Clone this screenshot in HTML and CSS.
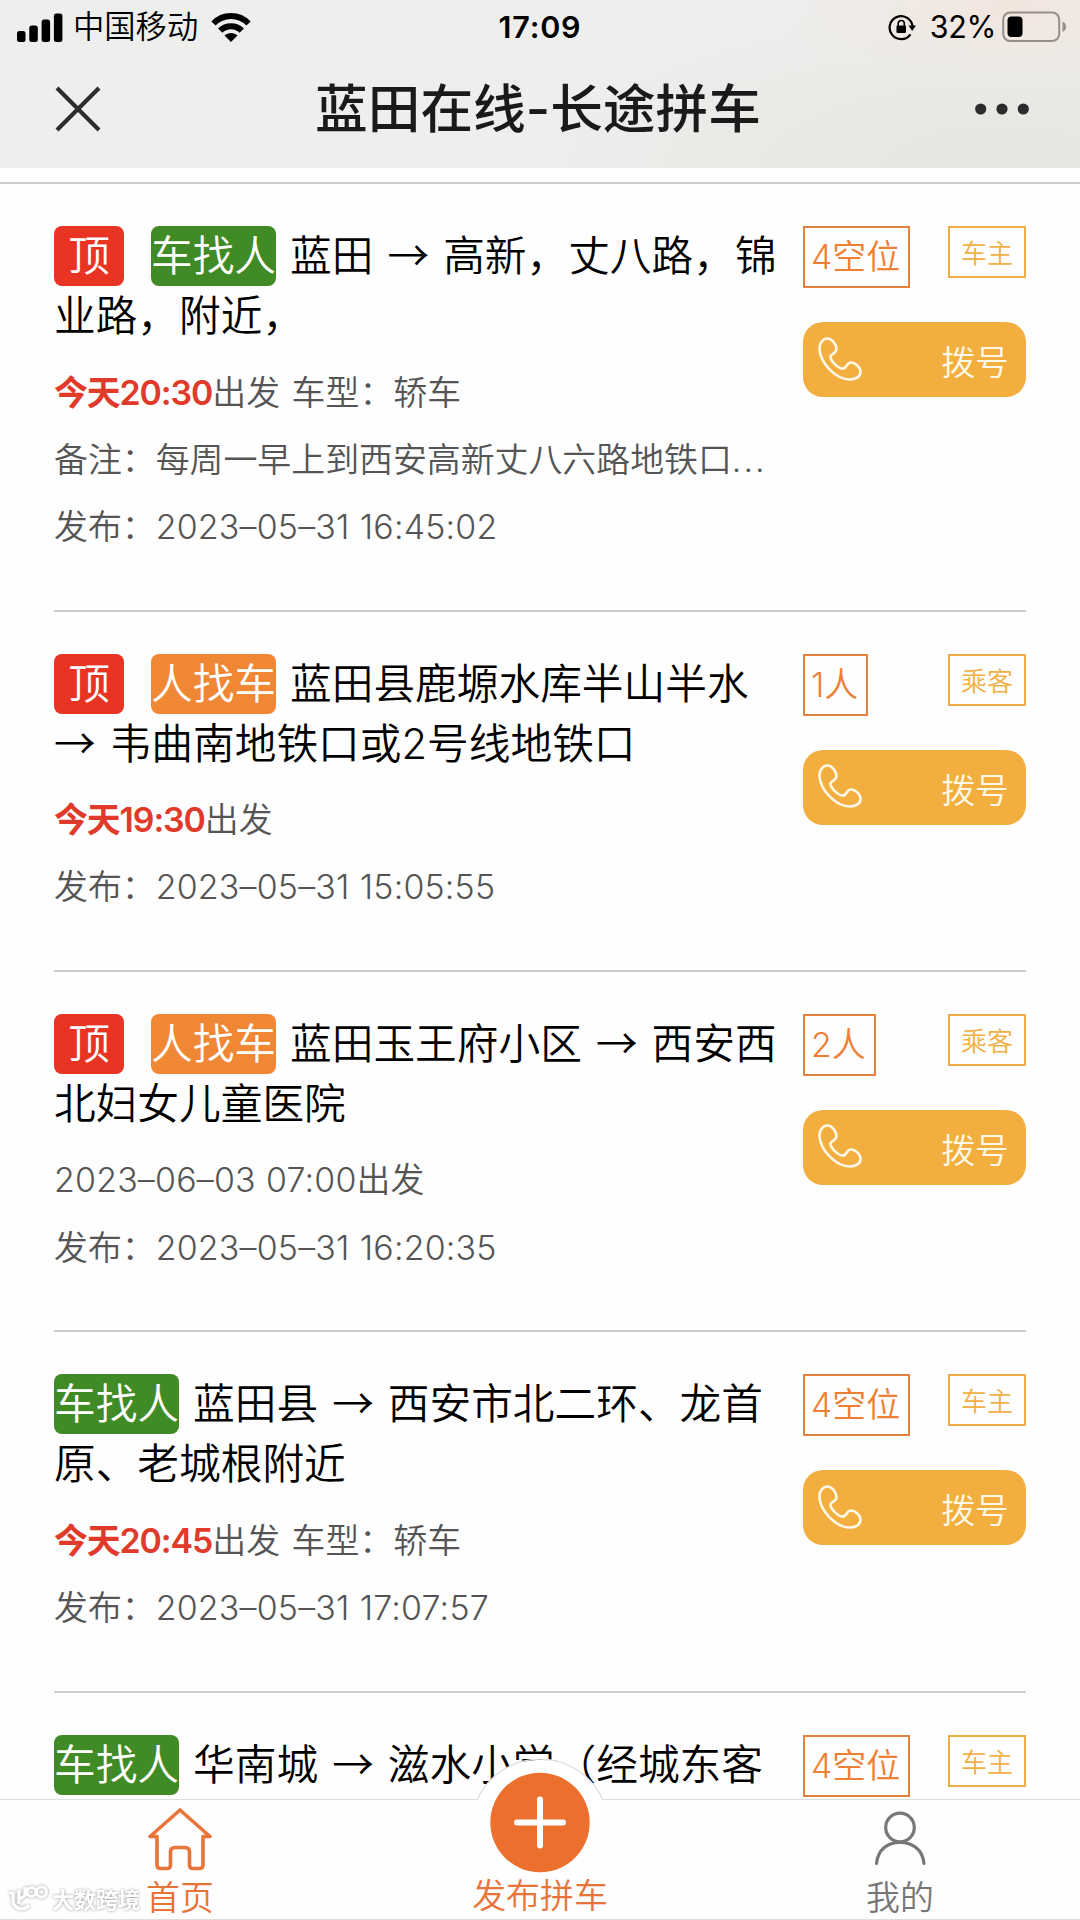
FILE: index.html
```html
<!DOCTYPE html>
<html lang="zh-CN">
<head>
    <meta charset="UTF-8">
    <meta name="viewport" content="width=device-width, initial-scale=1.0">
    <title>蓝田在线-长途拼车</title>
    <link rel="stylesheet" href="styles.css">
</head>
<body>
    <svg class="sprite" width="0" height="0">
        <symbol id="phone" viewBox="0 0 44 44">
            <path d="M9.500 1.500C5 1.500 1.500 6 1.500 11C1.500 26 18 42.500 32 42.500C38 42.500 42.500 39.500 42.500 35C42.500 30 37 25.500 33 25.500C28 25.500 29.500 31.500 24.500 31.500C20 31.500 12.500 24 12.500 19.500C12.500 16.500 18.500 17 18.500 12C18.500 7.500 14 1.500 9.500 1.500Z" fill="none" stroke="#fff8e6" stroke-width="2.6"/>
        </symbol>
    </svg>

    <header class="header">
        <div class="status-bar">
            <div class="status-left">
                <svg class="signal" width="46" height="29" viewBox="0 0 46 29">
                    <rect x="0" y="18" width="8.500" height="11" rx="2.500"/>
                    <rect x="12.300" y="12.500" width="8.500" height="16.500" rx="2.500"/>
                    <rect x="24.600" y="6.500" width="8.500" height="22.500" rx="2.500"/>
                    <rect x="36.900" y="0.500" width="8.500" height="28.500" rx="2.500"/>
                </svg>
                <span class="carrier">中国移动</span>
                <svg class="wifi" width="40" height="30" viewBox="0 0 40 30">
                    <g fill="none" stroke="#000" stroke-width="6">
                        <path d="M2.500 11.500C12 1.500 28 1.500 37.500 11.500"/>
                        <path d="M9.200 18.700C15 12.700 25 12.700 30.800 18.700"/>
                    </g>
                    <path d="M13.500 23.500C17 20 23 20 26.500 23.500L20 30Z"/>
                </svg>
            </div>
            <div class="clock">17:09</div>
            <div class="status-right">
                <svg class="lock" width="28" height="28" viewBox="0 0 28 28">
                    <path d="M22.500 21.300A11.500 11.500 0 1 1 24.500 13" fill="none" stroke="#000" stroke-width="2.2"/>
                    <path d="M20.500 12.500H28L24.200 18Z"/>
                    <rect x="8.500" y="12.500" width="9.500" height="7.500" rx="1"/>
                    <path d="M10.200 13V10.500A3 3 0 0 1 16.300 10.500V13" fill="none" stroke="#000" stroke-width="1.6"/>
                </svg>
                <span class="percent">32%</span>
                <svg class="battery" width="65" height="32" viewBox="0 0 65 32">
                    <rect x="1.200" y="1.500" width="56" height="28.500" rx="7" fill="none" stroke="#948d89" stroke-width="2"/>
                    <rect x="5.500" y="5.500" width="15" height="20.500" rx="4"/>
                    <path d="M60.500 10.500Q64 12 64 15.700T60.500 21Z" fill="#948d89"/>
                </svg>
            </div>
        </div>
        <div class="nav-bar">
            <svg class="close" width="46" height="46" viewBox="0 0 46 46">
                <path d="M2 2L44 44M44 2L2 44" stroke="#2c2c2c" stroke-width="4.200"/>
            </svg>
            <h1>蓝田在线-长途拼车</h1>
            <svg class="more" width="54" height="12" viewBox="0 0 54 12">
                <circle cx="5.700" cy="6" r="5.600"/>
                <circle cx="27" cy="6" r="5.600"/>
                <circle cx="48.300" cy="6" r="5.600"/>
            </svg>
        </div>
    </header>

    <main class="list">
        <article class="item">
            <div class="info">
                <h2><span class="tag top">顶</span><span class="tag car">车找人</span>蓝田<i>→</i>高新，丈八路，锦<br>业路，附近，</h2>
                <p><b>今天20:30</b>出发 车型：轿车</p>
                <p>备注：每周一早上到西安高新丈八六路地铁口<span class="dots">...</span></p>
                <p>发布：<span class="date">2023–05–31 16:45:02</span></p>
            </div>
            <div class="side">
                <div class="labels"><span class="seats">4空位</span><span class="role">车主</span></div>
                <button class="call"><svg width="44" height="44"><use href="#phone"/></svg>拨号</button>
            </div>
        </article>

        <article class="item">
            <div class="info">
                <h2><span class="tag top">顶</span><span class="tag people">人找车</span>蓝田县鹿塬水库半山半水<br><i class="first">→</i>韦曲南地铁口或2号线地铁口</h2>
                <p><b>今天19:30</b>出发</p>
                <p>发布：<span class="date">2023–05–31 15:05:55</span></p>
            </div>
            <div class="side">
                <div class="labels"><span class="seats">1人</span><span class="role">乘客</span></div>
                <button class="call"><svg width="44" height="44"><use href="#phone"/></svg>拨号</button>
            </div>
        </article>

        <article class="item">
            <div class="info">
                <h2><span class="tag top">顶</span><span class="tag people">人找车</span>蓝田玉王府小区<i>→</i>西安西<br>北妇女儿童医院</h2>
                <p><span class="date">2023–06–03 07:00</span>出发</p>
                <p>发布：<span class="date">2023–05–31 16:20:35</span></p>
            </div>
            <div class="side">
                <div class="labels"><span class="seats">2人</span><span class="role">乘客</span></div>
                <button class="call"><svg width="44" height="44"><use href="#phone"/></svg>拨号</button>
            </div>
        </article>

        <article class="item">
            <div class="info">
                <h2><span class="tag car">车找人</span>蓝田县<i>→</i>西安市北二环、龙首<br>原、老城根附近</h2>
                <p><b>今天20:45</b>出发 车型：轿车</p>
                <p>发布：<span class="date">2023–05–31 17:07:57</span></p>
            </div>
            <div class="side">
                <div class="labels"><span class="seats">4空位</span><span class="role">车主</span></div>
                <button class="call"><svg width="44" height="44"><use href="#phone"/></svg>拨号</button>
            </div>
        </article>

        <article class="item">
            <div class="info">
                <h2><span class="tag car">车找人</span>华南城<i>→</i>滋水小学（经城东客</h2>
            </div>
            <div class="side">
                <div class="labels"><span class="seats">4空位</span><span class="role">车主</span></div>
            </div>
        </article>
    </main>

    <nav class="tabbar">
        <a class="tab active">
            <svg width="66" height="66" viewBox="0 0 66 66">
                <path d="M33 3L3 29.500H10V58Q10 61.500 13.500 61.500H20Q23.500 61.500 23.500 58V45Q23.500 40.500 28 40.500H38Q42.500 40.500 42.500 45V58Q42.500 61.500 46 61.500H52.500Q56 61.500 56 58V29.500H63Z" fill="none" stroke="#e8743a" stroke-width="3.600" stroke-linejoin="round"/>
            </svg>
            <span>首页</span>
        </a>
        <a class="tab publish">
            <svg width="130" height="114" viewBox="0 0 130 114">
                <path d="M2 41.500A69 69 0 0 1 128 41.500V60H2Z" fill="#fff"/>
                <path d="M2 41A69 69 0 0 1 128 41" fill="none" stroke="#dedede" stroke-width="1.300"/>
                <circle cx="65" cy="63.500" r="49.700" fill="#eb702d"/>
                <path d="M42 63.500H88M65 40.500V86.500" stroke="#fff" stroke-width="6" stroke-linecap="round"/>
            </svg>
            <span>发布拼车</span>
        </a>
        <a class="tab">
            <svg width="66" height="66" viewBox="0 0 66 66">
                <g fill="none" stroke="#777" stroke-width="3.200" stroke-linecap="round">
                    <circle cx="33" cy="20.500" r="14.300"/>
                    <path d="M9.500 56.500C11 42 21 35.500 33 35.500S55.500 42 57 56.500"/>
                </g>
            </svg>
            <span>我的</span>
        </a>
        <div class="watermark">
            <svg width="42" height="30" viewBox="0 0 42 30">
                <g fill="none" stroke="#fff" stroke-width="3.200">
                    <path d="M1 8H5V17A9 9 0 0 0 21 20M11 5V19M19 9L12 14M17 2V11"/>
                    <circle cx="23.500" cy="7" r="4.500"/>
                    <circle cx="33.500" cy="7" r="5"/>
                </g>
            </svg>
            <span>大数跨境</span>
        </div>
    </nav>
</body>
</html>
```
FILE: styles.css
```css
* {
    box-sizing: border-box;
}

body {
    margin: 0;
    width: 1080px;
    height: 1920px;
    overflow: hidden;
    position: relative;
    background: #fefefe;
    font-family: Inter, "Noto Sans CJK SC", sans-serif;
    font-weight: 350;
}

h1, h2, p {
    margin: 0;
    font-weight: inherit;
}

.sprite {
    display: block;
}

/* header */
.header {
    height: 168px;
    background:
        radial-gradient(ellipse 230px 75px at 1010px 10px, #f2e6de, rgba(242, 230, 222, 0)),
        radial-gradient(ellipse 480px 170px at 1000px 168px, #e4e6df, rgba(228, 230, 223, 0)),
        #eeeeed;
}

.status-bar {
    height: 54px;
    display: grid;
    grid-template-columns: 1fr auto 1fr;
    align-items: center;
    padding: 0 13px 0 17px;
    font-size: 31px;
    line-height: 54px;
}

.status-left,
.status-right {
    display: flex;
    align-items: center;
}

.status-right {
    justify-content: flex-end;
}

.carrier {
    margin: 0 13px 0 10px;
    font-size: 31.3px;
}

.clock {
    margin-right: 4px;
    font-size: 30.5px;
    font-weight: 600;
    letter-spacing: 0.8px;
}

.percent {
    margin: 0 6px 0 14px;
    font-size: 30.5px;
    font-weight: 400;
    letter-spacing: -0.4px;
}

.nav-bar {
    height: 110px;
    display: flex;
    align-items: center;
    justify-content: space-between;
    padding: 0 51px 0 55px;
}

h1 {
    color: #1a1a1a;
    font-size: 52.7px;
    font-weight: 500;
    line-height: 112px;
}

.more {
    fill: #2c2c2c;
}

/* list */
.list {
    margin-top: 14px;
    border-top: 2px solid #ccc;
    padding: 0 54px;
}

.item {
    display: flex;
    justify-content: space-between;
    padding: 42px 0 49.5px;
    border-bottom: 2px solid #ccc;
}

.info {
    width: 749px;
    white-space: nowrap;
}

h2 {
    height: 120px;
    font-size: 41.7px;
    line-height: 60px;
    margin-bottom: 12.5px;
}

h2 i {
    font-family: "Noto Sans CJK SC", sans-serif;
    font-style: normal;
    line-height: 0;
    margin: 0 14px;
}

h2 i.first {
    margin-left: 0;
}

.tag {
    display: inline-block;
    height: 60px;
    margin-right: 14px;
    border-radius: 8px;
    color: #fff;
    vertical-align: top;
}

.top {
    width: 70px;
    margin-right: 27px;
    background: #e93323;
    text-align: center;
}

.car {
    background: #418b26;
}

.people {
    background: #ef8735;
}

.info p {
    height: 67.2px;
    color: #555;
    font-size: 33.9px;
    line-height: 67.2px;
    word-spacing: 2px;
}

.info b {
    color: #e03a2b;
    font-weight: 600;
    letter-spacing: -1.1px;
}

.date {
    letter-spacing: 0.2px;
    word-spacing: 0.5px;
}

.dots {
    letter-spacing: 2px;
}

.side {
    width: 223px;
}

.labels {
    display: flex;
    justify-content: space-between;
    align-items: flex-start;
    height: 96px;
}

.seats {
    height: 62px;
    padding: 0 8px 0 6px;
    border: 2.6px solid #e3813f;
    color: #ef7f35;
    font-size: 33.9px;
    line-height: 57px;
}

.role {
    width: 78px;
    height: 52px;
    border: 2.6px solid #ecae49;
    color: #f2b046;
    font-size: 26px;
    line-height: 51px;
    text-align: center;
}

.call {
    display: flex;
    align-items: center;
    justify-content: space-between;
    width: 223px;
    height: 75px;
    padding: 6px 17px 0 15px;
    border: none;
    border-radius: 20px;
    background: #f2ae3f;
    color: #fff8e6;
    font: inherit;
    font-size: 33.9px;
    line-height: 75px;
}

.call svg {
    margin-bottom: 8px;
}

/* bottom tab bar */
.tabbar {
    position: absolute;
    left: 0;
    bottom: 0;
    display: flex;
    width: 1080px;
    height: 121px;
    border-top: 1.5px solid #dedede;
    border-bottom: 1.5px solid #dedede;
    background: #fefefe;
}

.tab {
    flex: 1;
    display: flex;
    flex-direction: column;
    align-items: center;
    padding-top: 7px;
    color: #777;
    font-size: 33.9px;
    line-height: 50px;
}

.tab svg {
    flex: none;
}

.tab.active,
.tab.publish {
    color: #e8743a;
}

.publish {
    padding-top: 0;
    line-height: 46px;
}

.publish svg {
    margin-top: -41px;
}

.watermark {
    position: absolute;
    left: 8px;
    bottom: 2px;
    display: flex;
    align-items: center;
    gap: 2px;
    color: #fff;
    font-size: 22px;
    font-weight: 600;
    line-height: 34px;
    filter: drop-shadow(0 0 1.5px #999);
}
```
